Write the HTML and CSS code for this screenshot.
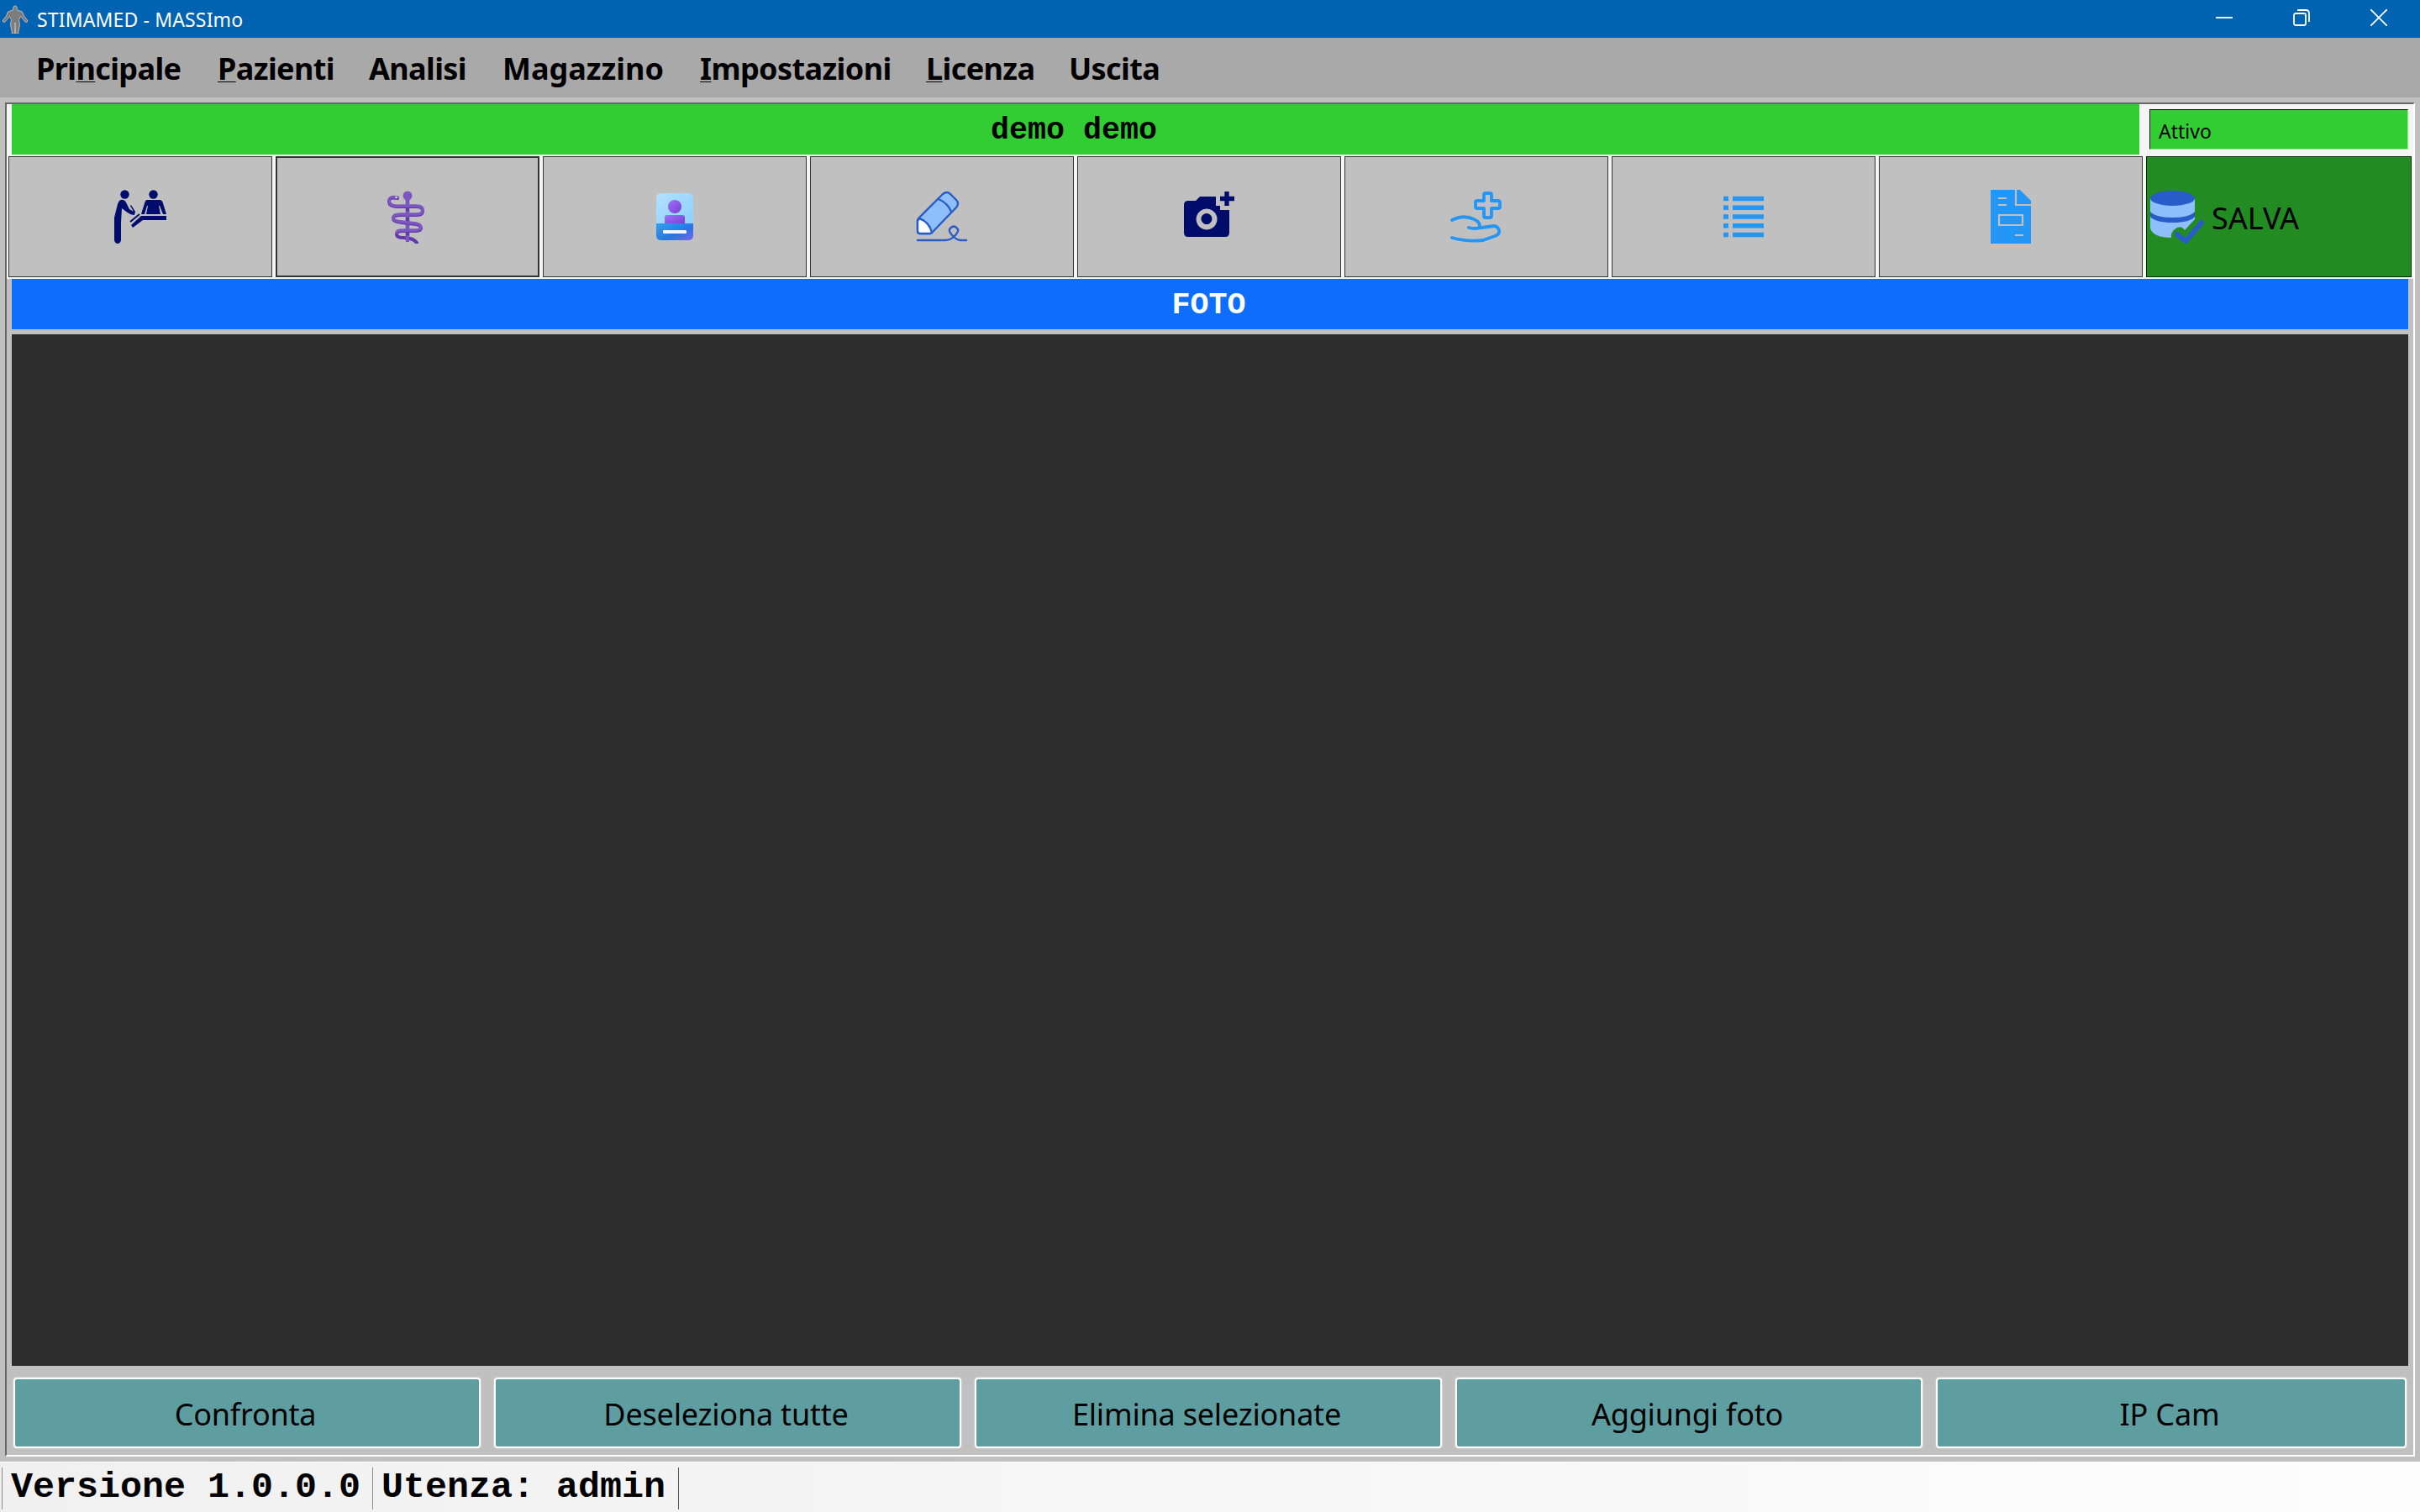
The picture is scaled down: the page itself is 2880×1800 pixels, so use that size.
FILE: index.html
```html
<!DOCTYPE html>
<html lang="it">
<head>
  <meta charset="UTF-8">
  <title>STIMAMED - MASSImo</title>
  <link rel="stylesheet" href="styles.css">
</head>
<body>
  <header class="titlebar">
    <svg class="app-icon" width="32" height="34" viewBox="0 0 32 34"><path d="M14 2q2-2.500 4 0l.5 4 6 2 2 5 4 5v2l-2 .5-6-7-2 4 1 6-2 10 1 .500h-4l-.5-13-.5 13h-4l1-.5-2-10 1-6-2-4-6 7-2-.5v-2l4-5 2-5 6-2z" fill="#7c7c7c" stroke="#c8c0b8" stroke-width=".9"/></svg>
    <span class="title">STIMAMED - MASSImo</span>
    <div class="win-btns">
      <svg width="20" height="20" viewBox="0 0 20 20"><path d="M0 10h20"/></svg>
      <svg width="20" height="20" viewBox="0 0 20 20"><rect x="1" y="5" width="14" height="14" rx="2"/><path d="M5 1h10q4 0 4 4v10"/></svg>
      <svg width="20" height="20" viewBox="0 0 20 20"><path d="M0 0l20 20M20 0L0 20"/></svg>
    </div>
  </header>
  <nav class="menu">
    <a class="m1">Pri<u>n</u>cipale</a>
    <a class="m2"><u>P</u>azienti</a>
    <a class="m3">Analisi</a>
    <a class="m4">Magazzino</a>
    <a class="m5"><u>I</u>mpostazioni</a>
    <a class="m6"><u>L</u>icenza</a>
    <a class="m7">Uscita</a>
  </nav>
  <main class="window">
    <div class="panel">
      <section class="top">
        <div class="patient-row">
          <div class="patient">demo demo</div>
          <div class="status">Attivo</div>
        </div>
        <div class="toolbar">
          <button class="tool visit">
            <svg width="64" height="64" viewBox="0 0 64 64"><g fill="#000c6b"><circle cx="14.500" cy="5.500" r="5.200"/><circle cx="48.500" cy="5.500" r="5.200"/><path d="M6 17q2-6 6-5 3 0 5 5l3 6 5 3-4-7 1-1 5 8-1 4q-5 0-11-5l-4-3-1 17v21q-1 4-4 4t-4-4V33zM41 12h15q3 0 4 4l4 13h-4l-4-10h-1l2 10H40l2-10h-1l-3 10h-4l4-13q1-4 3-4zM34 31h30v5H36L24 45l-2-3z"/></g><path d="M21 38l11-9" stroke="#000c6b" stroke-width="2"/></svg>
          </button>
          <button class="tool focus">
            <svg width="64" height="64" viewBox="0 0 64 64"><g fill="none" stroke-linecap="round"><path d="M32 10v50" stroke="#6438a8" stroke-width="4.500"/><path d="M20 10q-10-2-10 4 0 7 15 6h18q7 0 7 5t-7 5H24q-9 0-9 4t10 5l17 2q6 1 6 5-1 3-7 3H26q-7 0-7 4t9 4l7 1q5 1 8 5" stroke="#6438a8" stroke-width="4"/><path d="M20 9q-10-2-10 4 0 7 15 6h18q7 0 7 5t-7 5H24q-9 0-9 4t10 5l17 2q6 1 6 5-1 3-7 3H26q-7 0-7 3" stroke="#7c57c2" stroke-width="3.400"/><path d="M32 14v5M32 27v4M32 43v4M32 56v4" stroke="#7c57c2" stroke-width="4"/></g><circle cx="32" cy="7" r="5.500" fill="#7c57c2"/><circle cx="18.500" cy="9" r="1.200" fill="#e6dcf5"/></svg>
          </button>
          <button class="tool">
            <svg width="64" height="64" viewBox="0 0 64 64"><defs><linearGradient id="sky" x2="1" y2="1"><stop stop-color="#b3e0ff"/><stop offset="1" stop-color="#8cd0ff"/></linearGradient><linearGradient id="vio" x2="1" y2="1"><stop stop-color="#a070ff"/><stop offset="1" stop-color="#7a3fd0"/></linearGradient><linearGradient id="blu" x2="1" y2="1"><stop stop-color="#2ba5ee"/><stop offset=".6" stop-color="#2b72e8"/><stop offset="1" stop-color="#8064ea"/></linearGradient></defs><path d="M16 4h32q6 0 6 6v30H10V10q0-6 6-6z" fill="url(#sky)"/><circle cx="32" cy="20" r="8" fill="url(#vio)"/><path d="M20 40v-7q0-3 3-3h18q3 0 3 3v7z" fill="url(#vio)"/><path d="M10 40h44v14q0 6-6 6H16q-6 0-6-6z" fill="url(#blu)"/><rect x="18" y="48" width="28" height="4" rx="1" fill="#f0f6ff"/></svg>
          </button>
          <button class="tool">
            <svg width="64" height="64" viewBox="0 0 64 64"><g fill="none" stroke="#285cc8" stroke-width="2.400" stroke-linecap="round" stroke-linejoin="round"><path d="M4 34L33 5q5-4 9 0l7 7q4 4 0 9L21 50q-1 2-3 2H6q-3 0-3-3V37q0-2 1-3z" fill="#8fbffa"/><path d="M5 34q12 4 15 17l-2 1H6q-3 0-3-3V37z" fill="#fff"/><path d="M28 11q11 5 15 15M3 60h33q6 0 11-5 5-5 4-8-5-7-10 0-1 3 4 8 5 5 9 5h7"/></g></svg>
          </button>
          <button class="tool">
            <svg width="64" height="64" viewBox="0 0 64 64"><path fill="#000c6b" fill-rule="evenodd" d="M7 13h9l5-5h19v11h5v5h11v27q0 5-5 5H7q-5 0-5-5V18q0-5 5-5zM29 22.500a12.500 12.500 0 1 0 .1 0zM29 28a6.500 6.500 0 1 1-.1 0z"/><path d="M53 2v17M45 10.500h17" stroke="#000c6b" stroke-width="5.300"/></svg>
          </button>
          <button class="tool">
            <svg width="64" height="64" viewBox="0 0 64 64"><g class="line"><path d="M43 4h5q2 0 2 2v7h8q2 0 2 2v5q0 2-2 2h-8v9q0 2-2 2h-5q-2 0-2-2v-9h-8q-2 0-2-2v-5q0-2 2-2h8V6q0-2 2-2zM3 36q14-7 26-1 9 4 6 10M23 45q7 2 15 0l15-2q4 0 6 5 1 5-5 7l-14 5q-20 2-37-3"/></g></svg>
          </button>
          <button class="tool">
            <svg width="64" height="64" viewBox="0 0 64 64"><path d="M8 10.500h6M19 10.500h37M8 21.250h6M19 21.250h37M8 32h6M19 32h37M8 42.750h6M19 42.750h37M8 53.500h6M19 53.500h37" stroke="#2396f6" stroke-width="5.300"/></svg>
          </button>
          <button class="tool">
            <svg width="64" height="64" viewBox="0 0 64 64"><path d="M8 0h35l13 13v51H8z" fill="#2396f6"/><path d="M38 0v18h18M17 10h10M17 18h10M37 54h10M18 30h28v12H18z" fill="none" stroke="#c0c0c0" stroke-width="2.200"/></svg>
          </button>
          <button class="tool save">
            <svg width="66" height="64" viewBox="0 0 66 64"><path d="M1 10h53v25L42 48q-5-7-12-1-5 4-4 10Q5 57 1 46z" fill="#8fbffa"/><ellipse cx="27.500" cy="10" rx="26.500" ry="9" fill="#285cc8"/><path d="M1 26q6 7 26.500 7T54 26v6q-6 7-26.500 7T1 32z" fill="#285cc8"/><path d="M33 53l10 8 19-22" fill="none" stroke="#285cc8" stroke-width="6" stroke-linecap="round"/></svg>
            <span>SALVA</span>
          </button>
        </div>
      </section>
      <h1 class="section-title">FOTO</h1>
      <div class="photos"></div>
      <div class="actions">
        <button>Confronta</button>
        <button>Deseleziona tutte</button>
        <button>Elimina selezionate</button>
        <button>Aggiungi foto</button>
        <button>IP Cam</button>
      </div>
    </div>
  </main>
  <footer class="statusbar">
    <span class="version">Versione 1.0.0.0</span>
    <span class="user">Utenza: admin</span>
  </footer>
</body>
</html>
```
FILE: styles.css
```css
:root {
  --silver: #c0c0c0;
  --lime: #32cd32;
  --ui: "Noto Sans", sans-serif;
  --mono: "Liberation Mono", monospace;
}
* {
  box-sizing: border-box;
}
body {
  margin: 0;
  width: 2880px;
  height: 1800px;
  display: flex;
  flex-direction: column;
  background: var(--silver);
  color: #000;
  font-family: var(--ui);
  overflow: hidden;
}
button {
  margin: 0;
  padding: 0;
  font-family: inherit;
  color: #000;
}
.titlebar {
  height: 45px;
  display: flex;
  align-items: center;
  background: #0063b1;
  color: #fff;
}
.app-icon {
  margin-left: 2px;
}
.title {
  margin-left: 10px;
  padding-top: 1px;
  font-size: 23px;
  letter-spacing: 0.15px;
}
.win-btns {
  margin-left: auto;
  margin-right: 39px;
  padding-bottom: 3px;
  display: flex;
  gap: 72px;
}
.win-btns svg {
  fill: none;
  stroke: #fff;
  stroke-width: 1.8;
}
.menu {
  height: 71px;
  display: flex;
  align-items: center;
  padding: 2px 0 0 43px;
  background: #a9a9a9;
  font-size: 36px;
  font-weight: 700;
  letter-spacing: -0.6px;
  white-space: nowrap;
}
.menu u {
  text-decoration-thickness: 1px;
  text-underline-offset: 2px;
  text-decoration-skip-ink: none;
}
.m1 { width: 216px; }
.m2 { width: 180px; }
.m3 { width: 159px; }
.m4 { width: 235px; letter-spacing: 0; }
.m5 { width: 269px; }
.m6 { width: 170px; }
.window {
  height: 1624px;
  padding: 6px 6px 6px;
}
.panel {
  height: 1612px;
  border: 2px solid;
  border-color: #696969 #fff #fff #696969;
}
.top {
  height: 208px;
  background: #f5f5f5;
}
.patient-row {
  height: 60px;
  display: flex;
  padding-left: 6px;
}
.patient {
  width: 2532px;
  padding-right: 4px;
  background: var(--lime);
  font: 700 36.67px/62px var(--mono);
  text-align: center;
}
.status {
  width: 308px;
  height: 48px;
  margin: 6px 0 0 12px;
  padding-left: 10px;
  background: var(--lime);
  border: 1px solid;
  border-color: #111 #90ee90 #90ee90 #111;
  font-size: 23px;
  line-height: 51px;
}
.toolbar {
  display: grid;
  grid-template-columns: repeat(8, 314px) 316px;
  gap: 4px;
  padding: 2px;
}
.tool {
  height: 144px;
  display: flex;
  align-items: center;
  justify-content: center;
  background: var(--silver);
  border: 1px solid #333;
}
.tool.visit {
  padding-right: 3px;
}
.tool.focus {
  border-width: 2px;
}
.tool.save {
  justify-content: flex-start;
  gap: 8px;
  padding-left: 3px;
  background: #228b22;
  border-color: #0a280a;
  font-size: 36px;
}
.save span {
  padding-top: 2px;
}
.line {
  fill: none;
  stroke: #2396f6;
  stroke-width: 3.8;
  stroke-linecap: round;
  stroke-linejoin: round;
}
.section-title {
  height: 60px;
  margin: 0 6px 6px;
  padding-right: 3px;
  background: #0d6efd;
  color: #fff;
  font: 700 36.67px/62px var(--mono);
  text-align: center;
}
.photos {
  height: 1228px;
  margin: 0 6px;
  background: #2d2d2d;
}
.actions {
  display: grid;
  grid-template-columns: repeat(4, 556px) 560px;
  gap: 16px;
  padding: 14px 8px 0;
}
.actions button {
  height: 84px;
  padding: 2px 4px 0 0;
  border: 2px solid #fff;
  border-radius: 4px;
  background: #5f9ea0;
  box-shadow: 0 0 1px 1px rgba(255, 255, 255, 0.25);
  font-size: 36px;
  letter-spacing: -0.2px;
}
.statusbar {
  height: 60px;
  display: flex;
  align-items: flex-start;
  padding: 6px 0 0 2px;
  border-top: 1px solid #fff;
  background: linear-gradient(90deg, #f0f0f0, #fdfdfd);
  font: 700 43.33px/47px var(--mono);
}
.statusbar span {
  height: 50px;
  padding-left: 10px;
  white-space: pre;
}
.version {
  width: 442px;
  border-left: 1px solid #8c8c8c;
  border-right: 1px solid #8c8c8c;
}
.user {
  width: 364px;
  border-right: 1px solid #555;
}
```
